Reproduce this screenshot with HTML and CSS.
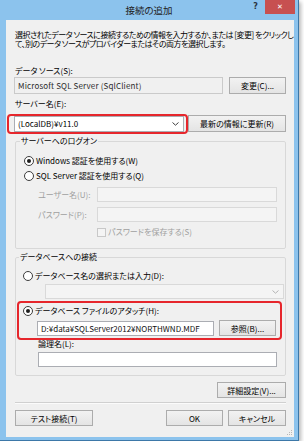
FILE: index.html
```html
<!DOCTYPE html>
<html>
<head>
  <title>接続の追加</title>
  <link rel="stylesheet" href="styles.css">
</head>
<body>

<div class="window">
  <div class="titlebar">
    <span></span>
    <span class="title">接続の追加</span>
    <div class="caption-btns">
      <span class="help">?</span>
      <span class="close">&#x2715;</span>
    </div>
  </div>

  <div class="client">
    <p class="intro">選択されたデータ ソースに接続するための情報を入力するか、または [変更] をクリックし<br>て、別のデータ ソースがプロバイダーまたはその両方を選択します。</p>

    <div class="label label-source">データ ソース(S):</div>
    <div class="row row-source">
      <div class="textbox readonly source-box">Microsoft SQL Server (SqlClient)</div>
      <button class="btn btn-change">変更(C)...</button>
    </div>

    <div class="label label-server">サーバー名(E):</div>
    <div class="row row-server">
      <div class="combo server-combo marked">
        <span>(LocalDB)¥v11.0</span>
        <svg class="arrow" width="7" height="4" viewBox="0 0 7 4"><path d="M0.5 0.5 L3.5 3.2 L6.5 0.5" fill="none" stroke="#404040" stroke-width="1"/></svg>
      </div>
      <button class="btn btn-refresh">最新の情報に更新(R)</button>
    </div>

    <fieldset class="group group-logon">
      <legend>サーバーへのログオン</legend>
      <div class="option first">
        <span class="radio checked"></span>
        <span>Windows 認証を使用する(W)</span>
      </div>
      <div class="option">
        <span class="radio"></span>
        <span>SQL Server 認証を使用する(Q)</span>
      </div>
      <div class="cred-row cred-user">
        <span class="cred-label">ユーザー名(U):</span>
        <div class="textbox disabled cred-box"></div>
      </div>
      <div class="cred-row">
        <span class="cred-label">パスワード(P):</span>
        <div class="textbox disabled cred-box"></div>
      </div>
      <div class="save-row">
        <span class="checkbox"></span>
        <span>パスワードを保存する(S)</span>
      </div>
    </fieldset>

    <fieldset class="group group-db">
      <legend>データベースへの接続</legend>
      <div class="option first-db">
        <span class="radio"></span>
        <span>データベース名の選択または入力(D):</span>
      </div>
      <div class="combo disabled db-combo">
        <span></span>
        <svg class="arrow" width="7" height="4" viewBox="0 0 7 4"><path d="M0.5 0.5 L3.5 3.2 L6.5 0.5" fill="none" stroke="#b4b4b4" stroke-width="1"/></svg>
      </div>
      <div class="attach marked">
        <div class="option">
          <span class="radio checked"></span>
          <span>データベース ファイルのアタッチ(H):</span>
        </div>
        <div class="row attach-row">
          <div class="textbox file-box">D:¥data¥SQLServer2012¥NORTHWND.MDF</div>
          <button class="btn btn-browse">参照(B)...</button>
        </div>
      </div>
      <div class="label label-logical">論理名(L):</div>
      <div class="textbox logical-box"></div>
    </fieldset>

    <div class="advanced-row">
      <button class="btn btn-advanced">詳細設定(V)...</button>
    </div>

    <hr class="separator">

    <div class="footer">
      <button class="btn btn-test">テスト接続(T)</button>
      <div class="footer-right">
        <button class="btn btn-ok">OK</button>
        <button class="btn btn-cancel">キャンセル</button>
      </div>
    </div>

    <svg class="grip" width="7" height="7" viewBox="0 0 7 7">
      <rect x="5" y="1" width="1" height="1" fill="#b8b8b8"/>
      <rect x="3" y="3" width="1" height="1" fill="#b8b8b8"/>
      <rect x="5" y="3" width="1" height="1" fill="#b8b8b8"/>
      <rect x="1" y="5" width="1" height="1" fill="#b8b8b8"/>
      <rect x="3" y="5" width="1" height="1" fill="#b8b8b8"/>
      <rect x="5" y="5" width="1" height="1" fill="#b8b8b8"/>
    </svg>
  </div>
</div>

</body>
</html>
```

FILE: styles.css
```css
body { margin: 0; background: #ffffff; font-family: "Noto Sans CJK JP", "Noto Sans", sans-serif; font-size: 8px; color: #000; font-feature-settings: "palt"; }

/* window frame */
.window { width: 298px; height: 440px; background: #8cc3ed; border-right: 1px solid #3d78a8; border-bottom: 1px solid #3d78a8; box-shadow: 2px 2px 4px rgba(0, 0, 0, 0.28); display: flex; flex-direction: column; }
.titlebar { height: 20px; display: grid; grid-template-columns: 1fr auto 1fr; align-items: start; }
.title { font-size: 9.5px; line-height: 20px; color: #222; }
.caption-btns { display: flex; justify-content: flex-end; align-items: flex-start; }
.help { font-family: "DejaVu Sans", sans-serif; font-weight: bold; font-size: 8px; line-height: 14px; color: #2a3440; margin-right: 7px; }
.close { width: 30px; height: 14px; margin-right: 3px; background: #c75050; color: #fff; font-family: "DejaVu Sans", sans-serif; font-weight: bold; font-size: 7px; line-height: 14px; text-align: center; }

.client { position: relative; margin: 0 4px 0 6px; height: 417px; background: #f0f0f0; padding: 0 8px; box-sizing: border-box; }

.intro { margin: 0; padding-top: 10px; padding-left: 1px; line-height: 9px; letter-spacing: -0.5px; white-space: nowrap; }
.label { line-height: 10px; padding-left: 1px; }
.label-source { margin-top: 18px; }
.label-server { margin-top: 5px; }

.row { display: flex; align-items: center; }
.row-source { margin-top: 1px; gap: 6px; }
.row-server { margin-top: 6px; gap: 4px; }

/* boxes */
.textbox { box-sizing: border-box; border: 1px solid #abadb3; background: #fff; height: 15px; line-height: 13px; padding: 0 3px; white-space: nowrap; overflow: hidden; }
.textbox.readonly { background: #f0f0f0; border-color: #cacaca; color: #2a2a2a; height: 17px; line-height: 15px; }
.textbox.disabled { background: #f4f4f4; border-color: #d9d9d9; }
.source-box { width: 209px; letter-spacing: 0.15px; }

.combo { box-sizing: border-box; display: flex; align-items: center; justify-content: space-between; border: 1px solid #abadb3; background: #fff; padding: 0 4px 0 3px; }
.combo.disabled { background: #f4f4f4; border-color: #d9d9d9; }
.server-combo { width: 170px; height: 16px; }
.db-combo { width: 239px; height: 15px; margin: 3px 0 0 22px; }

.marked { position: relative; }
.marked::before { content: ""; position: absolute; border: 2px solid #e6262c; border-radius: 4px; pointer-events: none; }
.server-combo::before { left: -8px; right: -5px; top: -3px; bottom: -3px; }
.attach::before { left: -6px; right: 3px; top: -5px; bottom: -4px; }

/* buttons */
.btn { box-sizing: border-box; height: 17px; border: 1px solid #acacac; background: linear-gradient(#f2f2f2, #e4e4e4); font-family: inherit; font-size: 8px; font-feature-settings: "palt"; color: #000; padding: 0; }
.btn-change { width: 57px; }
.btn-refresh { width: 98px; height: 17px; }
.btn-browse { width: 57px; height: 16px; }
.btn-advanced { width: 69px; }
.btn-test { width: 78px; }
.btn-ok { width: 57px; }
.btn-cancel { width: 58px; }

/* groups */
.group { margin: 4px 0 0 1px; padding: 0 0 11px 8px; border: 1px solid #d8d8d8; border-radius: 2px; }
.group legend { margin-left: -4px; padding: 0 1px; line-height: 10px; }
.group-db { margin-top: 3px; padding: 0 0 8px 7px; }

.option { display: flex; align-items: center; gap: 2px; line-height: 10px; }
.option.first { margin-top: 10px; }
.option + .option { margin-top: 5px; }
.first-db { margin-top: 9px; }
.radio { box-sizing: border-box; width: 10px; height: 10px; border: 1px solid #3c3c3c; border-radius: 50%; background: #fff; display: flex; align-items: center; justify-content: center; }
.radio.checked::after { content: ""; width: 4px; height: 4px; border-radius: 50%; background: #1e1e1e; }

.cred-row { display: flex; align-items: center; margin-top: 5px; padding-left: 14px; }
.cred-user { margin-top: 6px; }
.cred-label { width: 59px; color: #a0a0a0; }
.cred-box { width: 180px; }
.save-row { display: flex; align-items: center; gap: 2px; margin-top: 5px; padding-left: 73px; color: #a0a0a0; line-height: 10px; }
.checkbox { box-sizing: border-box; width: 9px; height: 9px; border: 1px solid #c8c8c8; background: #f4f4f4; }

.attach { margin-top: 7px; }
.attach-row { margin: 4px 0 0 14px; gap: 5px; }
.file-box { width: 177px; color: #111; }
.label-logical { margin: 3px 0 0 14px; }
.logical-box { width: 239px; margin: 3px 0 0 15px; }

.advanced-row { display: flex; justify-content: flex-end; margin-top: 6px; }
.btn-advanced { height: 16px; }
.separator { margin: 4px 0 0 1px; border: 0; border-top: 1px solid #d0d0d0; border-bottom: 1px solid #fbfbfb; }
.footer { display: flex; justify-content: space-between; margin-top: 6px; padding-left: 1px; }
.footer .btn { height: 16px; }
.footer-right { display: flex; gap: 5px; }

.grip { position: absolute; right: 1px; bottom: 1px; }
```
